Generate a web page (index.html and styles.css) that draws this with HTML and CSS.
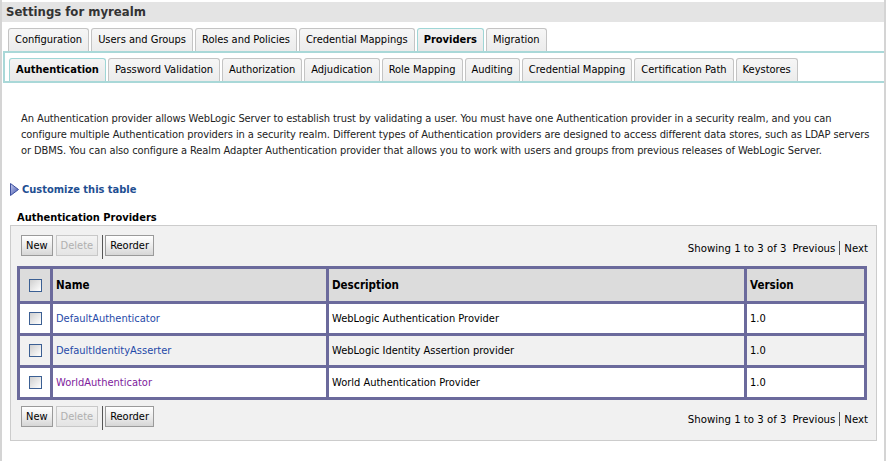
FILE: index.html
```html
<!DOCTYPE html>
<html lang="en">
<head>
  <meta charset="UTF-8" />
  <title>Settings for myrealm</title>
  <link rel="stylesheet" href="styles.css">
</head>
<body>
  <div class="page">
    <div class="title">Settings for myrealm</div>

    <div class="tabs main-tabs">
      <a class="tab">Configuration</a>
      <a class="tab">Users and Groups</a>
      <a class="tab">Roles and Policies</a>
      <a class="tab">Credential Mappings</a>
      <a class="tab active">Providers</a>
      <a class="tab">Migration</a>
    </div>

    <div class="subtabs-box">
      <div class="tabs sub-tabs">
        <a class="tab active">Authentication</a>
        <a class="tab">Password Validation</a>
        <a class="tab">Authorization</a>
        <a class="tab">Adjudication</a>
        <a class="tab">Role Mapping</a>
        <a class="tab">Auditing</a>
        <a class="tab">Credential Mapping</a>
        <a class="tab">Certification Path</a>
        <a class="tab">Keystores</a>
      </div>
    </div>

    <p class="intro">An Authentication provider allows WebLogic Server to establish trust by validating a user. You must have one Authentication provider in a security realm, and you can<br>
    configure multiple Authentication providers in a security realm. Different types of Authentication providers are designed to access different data stores, such as LDAP servers<br>
    or DBMS. You can also configure a Realm Adapter Authentication provider that allows you to work with users and groups from previous releases of WebLogic Server.</p>

    <div class="customize">
      <svg width="9" height="13" viewBox="0 0 9 13">
        <defs>
          <linearGradient id="tri" x1="0" y1="0" x2="1" y2="1">
            <stop offset="0" stop-color="#c8cdf0"/>
            <stop offset="1" stop-color="#3a4fa8"/>
          </linearGradient>
        </defs>
        <polygon points="0.5,0.5 8.5,6.5 0.5,12.5" fill="url(#tri)" stroke="#3c4f9e" stroke-width="1"/>
      </svg>
      <a>Customize this table</a>
    </div>

    <h3 class="caption">Authentication Providers</h3>

    <div class="panel">
      <div class="toolbar">
        <div class="buttons">
          <button class="btn">New</button>
          <button class="btn disabled">Delete</button>
          <span class="sep"></span>
          <button class="btn">Reorder</button>
        </div>
        <div class="paging">Showing 1 to 3 of 3 <span class="prev">Previous</span><span class="bar"></span>Next</div>
      </div>

      <table class="grid">
        <thead>
          <tr>
            <th class="check"><span class="box"></span></th>
            <th class="name">Name</th>
            <th class="desc">Description</th>
            <th class="ver">Version</th>
          </tr>
        </thead>
        <tbody>
          <tr>
            <td class="check"><span class="box"></span></td>
            <td><a class="link">DefaultAuthenticator</a></td>
            <td>WebLogic Authentication Provider</td>
            <td>1.0</td>
          </tr>
          <tr class="alt">
            <td class="check"><span class="box"></span></td>
            <td><a class="link">DefaultIdentityAsserter</a></td>
            <td>WebLogic Identity Assertion provider</td>
            <td>1.0</td>
          </tr>
          <tr>
            <td class="check"><span class="box"></span></td>
            <td><a class="link visited">WorldAuthenticator</a></td>
            <td>World Authentication Provider</td>
            <td>1.0</td>
          </tr>
        </tbody>
      </table>

      <div class="toolbar bottom">
        <div class="buttons">
          <button class="btn">New</button>
          <button class="btn disabled">Delete</button>
          <span class="sep"></span>
          <button class="btn">Reorder</button>
        </div>
        <div class="paging">Showing 1 to 3 of 3 <span class="prev">Previous</span><span class="bar"></span>Next</div>
      </div>
    </div>
  </div>
</body>
</html>
```

FILE: styles.css
```css
* {
  box-sizing: border-box;
}

body {
  margin: 0;
  background: #ffffff;
  font-family: "DejaVu Sans Condensed", "DejaVu Sans", sans-serif;
  font-size: 11px;
  color: #000;
}

.page {
  width: 886px;
  height: 461px;
  border-left: 2px solid #d4d4d4;
  border-right: 2px solid #d4d4d4;
  padding-top: 2px;
  overflow: hidden;
}

.title {
  height: 20px;
  line-height: 20px;
  background: #e4e4e4;
  font-weight: bold;
  font-size: 13px;
  color: #333;
  padding-left: 4px;
}

/* Tabs */
.tabs {
  display: flex;
  gap: 2px;
}

.tab {
  display: block;
  height: 23px;
  line-height: 22px;
  padding: 0 6px;
  font-size: 11px;
  color: #000;
  border: 1px solid #c4c4c4;
  border-bottom: none;
  border-radius: 3px 3px 0 0;
  background: linear-gradient(#f6f6f6, #ececec);
  white-space: nowrap;
}

.tab.active {
  font-weight: bold;
  border-color: #9fd6d6;
  background: linear-gradient(#f4f4f4, #e8e8e8);
}

.main-tabs {
  margin-top: 6px;
  padding-left: 5px;
  border-bottom: 2px solid #a9d8d8;
  margin-left: 1px;
}

.subtabs-box {
  margin-left: 1px;
  border-left: 2px solid #a9d8d8;
  border-bottom: 2px solid #a9d8d8;
  padding-top: 5px;
  padding-left: 4px;
}

/* Intro text */
.intro {
  margin: 28px 0 0 19px;
  line-height: 16px;
  color: #222;
  white-space: nowrap;
  letter-spacing: -0.08px;
}

.customize {
  display: flex;
  align-items: center;
  gap: 3px;
  margin: 24px 0 0 8px;
}

.customize svg {
  display: block;
}

.customize a {
  font-weight: bold;
  font-size: 11px;
  color: #1f4f92;
}

.caption {
  margin: 15px 0 0 15px;
  font-size: 11px;
  font-weight: bold;
  color: #000;
}

/* Panel */
.panel {
  margin: 1px 0 0 8px;
  width: 867px;
  background: #f1f1f1;
  border: 1px solid #cccccc;
  padding: 9px 8px 10px 6px;
}

.toolbar {
  display: flex;
  justify-content: space-between;
  align-items: flex-end;
  padding-left: 4px;
}

.toolbar.bottom {
  margin-top: 6px;
}

.buttons {
  display: flex;
  align-items: flex-start;
  gap: 3px;
  height: 24px;
}

.btn {
  font-family: inherit;
  font-size: 11px;
  height: 21px;
  padding: 0 4px;
  border: 1px solid #9a9a9a;
  border-radius: 0;
  background: linear-gradient(#ffffff, #ededed 50%, #d6d6d6);
  color: #000;
}

.btn.disabled {
  color: #b0b0b0;
  border-color: #c8c8c8;
  background: linear-gradient(#f4f4f4, #e4e4e4);
}

.sep {
  width: 1px;
  height: 24px;
  background: #555;
  margin-left: 1px;
  margin-right: -1px;
}

.paging {
  font-size: 11.3px;
  color: #000;
  padding-bottom: 4px;
  display: flex;
  align-items: center;
}

.prev {
  margin-left: 6px;
}

.paging .bar {
  display: inline-block;
  width: 1px;
  height: 14px;
  background: #555;
  margin: 0 4px;
}

/* Table */
.grid {
  margin-top: 7px;
  width: 850px;
  border-collapse: collapse;
  border: 3px solid #6b6a9c;
}

.grid th,
.grid td {
  border: 3px solid #6b6a9c;
  text-align: left;
  padding: 0 3px;
  height: 32px;
}

.grid th {
  background: #dcdcdc;
  font-size: 11.5px;
  height: 35px;
}

.grid td {
  background: #ffffff;
}

.grid tr.alt td {
  background: #f1f1f1;
}

.grid .check {
  width: 33px;
  text-align: center;
  padding: 0;
}

.grid .name {
  width: 276px;
}

.grid .desc {
  width: 418px;
}

.box {
  display: inline-block;
  width: 13px;
  height: 13px;
  border: 1px solid #3b5f93;
  background: linear-gradient(135deg, #cfcfcf, #ffffff);
  vertical-align: middle;
}

.link {
  color: #1f49a8;
}

.link.visited {
  color: #7e1b9c;
}
```
